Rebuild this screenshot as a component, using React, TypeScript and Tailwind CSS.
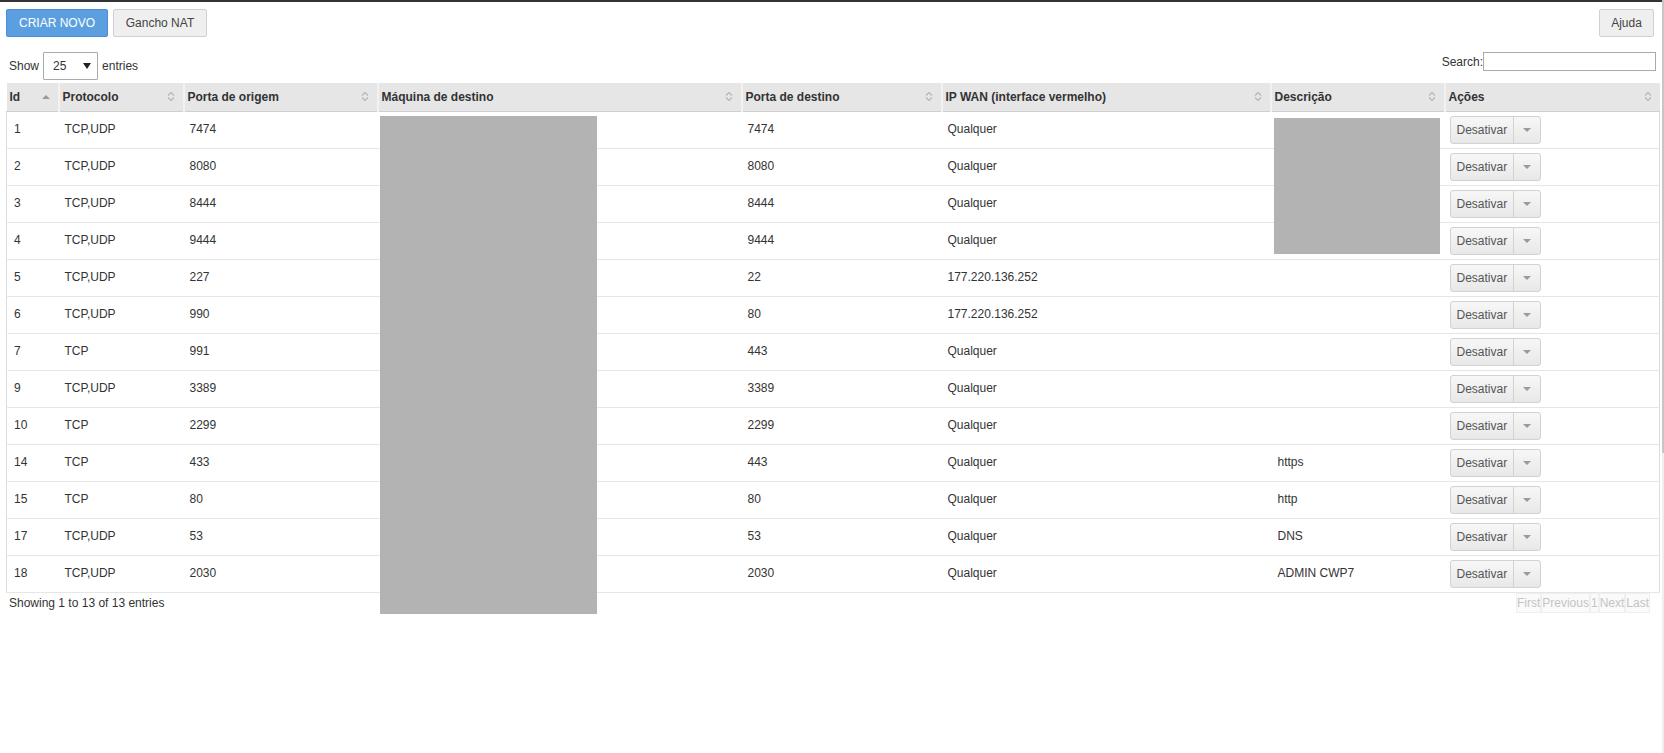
import React from 'react'

type Row = {
  id: number
  proto: string
  origem: string
  destino: string
  wan: string
  desc: string
}

const ROWS: Row[] = [
  { id: 1,  proto: 'TCP,UDP', origem: '7474', destino: '7474', wan: 'Qualquer',        desc: '' },
  { id: 2,  proto: 'TCP,UDP', origem: '8080', destino: '8080', wan: 'Qualquer',        desc: '' },
  { id: 3,  proto: 'TCP,UDP', origem: '8444', destino: '8444', wan: 'Qualquer',        desc: '' },
  { id: 4,  proto: 'TCP,UDP', origem: '9444', destino: '9444', wan: 'Qualquer',        desc: '' },
  { id: 5,  proto: 'TCP,UDP', origem: '227',  destino: '22',   wan: '177.220.136.252', desc: '' },
  { id: 6,  proto: 'TCP,UDP', origem: '990',  destino: '80',   wan: '177.220.136.252', desc: '' },
  { id: 7,  proto: 'TCP',     origem: '991',  destino: '443',  wan: 'Qualquer',        desc: '' },
  { id: 9,  proto: 'TCP,UDP', origem: '3389', destino: '3389', wan: 'Qualquer',        desc: '' },
  { id: 10, proto: 'TCP',     origem: '2299', destino: '2299', wan: 'Qualquer',        desc: '' },
  { id: 14, proto: 'TCP',     origem: '433',  destino: '443',  wan: 'Qualquer',        desc: 'https' },
  { id: 15, proto: 'TCP',     origem: '80',   destino: '80',   wan: 'Qualquer',        desc: 'http' },
  { id: 17, proto: 'TCP,UDP', origem: '53',   destino: '53',   wan: 'Qualquer',        desc: 'DNS' },
  { id: 18, proto: 'TCP,UDP', origem: '2030', destino: '2030', wan: 'Qualquer',        desc: 'ADMIN CWP7' },
]

const COLUNAS = [
  { titulo: 'Id',                           largura: 'w-[52px]',  asc: true },
  { titulo: 'Protocolo',                    largura: 'w-[125px]' },
  { titulo: 'Porta de origem',              largura: 'w-[194px]' },
  { titulo: 'Máquina de destino',           largura: 'w-[364px]' },
  { titulo: 'Porta de destino',             largura: 'w-[200px]' },
  { titulo: 'IP WAN (interface vermelho)',  largura: 'w-[329px]' },
  { titulo: 'Descrição',                    largura: 'w-[174px]' },
  { titulo: 'Ações',                        largura: 'w-[215px]' },
]

function SortBoth() {
  return (
    <svg width="8" height="11" viewBox="0 0 8 11" className="shrink-0">
      <path d="M1 4.5 L4 1.5 L7 4.5" fill="none" stroke="#b5b5b5" strokeWidth="1.2" />
      <path d="M1 6.5 L4 9.5 L7 6.5" fill="none" stroke="#b5b5b5" strokeWidth="1.2" />
    </svg>
  )
}

function SortAsc() {
  return (
    <svg width="8" height="5" viewBox="0 0 8 5" className="shrink-0">
      <path d="M0 5 L4 1 L8 5 Z" fill="#9a9a9a" />
    </svg>
  )
}

function Caret() {
  return (
    <svg width="8" height="4" viewBox="0 0 8 4">
      <path d="M0 0 L8 0 L4 4 Z" fill="#9a9a9a" />
    </svg>
  )
}

function BotaoDesativar() {
  return (
    <div className="inline-flex h-[28px] rounded-[3px] border border-[#d2d2d2] bg-gradient-to-b from-[#f7f7f7] to-[#e8e8e8] text-[#555]">
      <span className="flex items-center px-[6px] border-r border-[#d2d2d2]">Desativar</span>
      <span className="flex items-center justify-center w-[26px]">
        <Caret />
      </span>
    </div>
  )
}

export default function App() {
  return (
    <div className="flex min-h-screen bg-white font-['Liberation_Sans',Arial,sans-serif] text-[12px] text-[#333]">
      <div className="relative flex-1 border-t-2 border-[#333] pl-[6px] pr-[2px]">

        <div className="flex items-center mt-[7px] h-[28px] gap-[5px] pr-[6px]">
          <button className="h-[28px] w-[102px] rounded-[2px] border border-[#4d8fd4] bg-[#5c9fe0] text-white uppercase">
            Criar novo
          </button>
          <button className="h-[28px] w-[94px] rounded-[2px] border border-[#d0d0d0] bg-[#efefef] text-[#444]">
            Gancho NAT
          </button>
          <button className="ml-auto h-[28px] w-[55px] rounded-[2px] border border-[#d0d0d0] bg-[#efefef] text-[#444]">
            Ajuda
          </button>
        </div>

        <div className="flex items-start justify-between mt-[15px] h-[28px]">
          <div className="flex items-center h-[28px] pl-[3px]">
            <span>Show</span>
            <div className="mx-[4px] flex items-center justify-between h-[28px] w-[55px] border border-[#aaa] rounded-[1px] pl-[9px] pr-[6px]">
              <span>25</span>
              <svg width="8" height="6" viewBox="0 0 8 6"><path d="M0 0 L8 0 L4 6 Z" fill="#222" /></svg>
            </div>
            <span>entries</span>
          </div>
          <div className="flex items-center h-[19px] pr-[4px]">
            <span>Search:</span>
            <div className="h-[19px] w-[173px] border border-[#aaa]" />
          </div>
        </div>

        <table className="mt-[3px] table-fixed border-collapse w-[1653px]">
          <colgroup>
            {COLUNAS.map((c) => (
              <col key={c.titulo} className={c.largura} />
            ))}
          </colgroup>
          <thead>
            <tr className="h-[28px] bg-[#e6e6e6] border-b border-[#cfcfcf]">
              {COLUNAS.map((c, i) => (
                <th
                  key={c.titulo}
                  className={`p-0 text-left font-bold ${i > 0 ? 'border-l-2 border-[#f2f2f2]' : ''}`}
                >
                  <div className="flex items-center justify-between pl-[3px] pr-[8px]">
                    <span>{c.titulo}</span>
                    {c.asc ? <SortAsc /> : <SortBoth />}
                  </div>
                </th>
              ))}
            </tr>
          </thead>
          <tbody className="border-x border-[#dcdcdc]">
            {ROWS.map((r) => (
              <tr key={r.id} className="h-[37px] border-b border-[#e6e6e6]">
                <td className="pl-[7px] pb-[1px]">{r.id}</td>
                <td className="pl-[6px] pb-[1px]">{r.proto}</td>
                <td className="pl-[6px] pb-[1px]">{r.origem}</td>
                <td />
                <td className="pl-[6px] pb-[1px]">{r.destino}</td>
                <td className="pl-[6px] pb-[1px]">{r.wan}</td>
                <td className="pl-[7px] pb-[1px]">{r.desc}</td>
                <td className="pl-[5px]">
                  <BotaoDesativar />
                </td>
              </tr>
            ))}
          </tbody>
        </table>

        <div className="flex items-center justify-between pl-[3px] pr-[10px]">
          <span>Showing 1 to 13 of 13 entries</span>
          <div className="flex text-[#c4c4c4]">
            {['First', 'Previous', '1', 'Next', 'Last'].map((p) => (
              <span key={p} className="border border-[#efefef] bg-[#fafafa]">
                {p}
              </span>
            ))}
          </div>
        </div>

        {/* tarjas de ocultação */}
        <div className="absolute left-[380px] top-[114px] w-[217px] h-[498px] bg-[#b3b3b3]" />
        <div className="absolute left-[1274px] top-[116px] w-[166px] h-[136px] bg-[#b3b3b3]" />
      </div>

      <div className="flex w-[3px] flex-col">
        <div className="h-[453px] bg-[#c6c6c6]" />
        <div className="flex-1 bg-[#efefef]" />
      </div>
    </div>
  )
}
